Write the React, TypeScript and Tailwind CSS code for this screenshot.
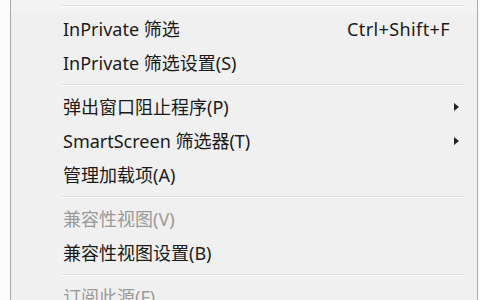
import React from "react";

const font = { fontFamily: '"Noto Sans", "Noto Sans CJK SC", sans-serif' };

function Sep() {
  return (
    <div className="h-[10px] shrink-0 flex flex-col justify-center pl-[50px] pr-[12px]">
      <div className="h-px bg-[#e0e0e0]" />
      <div className="h-px bg-[#fdfdfd]" />
    </div>
  );
}

function Item({
  label,
  shortcut,
  arrow,
  disabled,
}: {
  label: string;
  shortcut?: string;
  arrow?: boolean;
  disabled?: boolean;
}) {
  return (
    <div
      className={`h-[34px] shrink-0 flex items-center pl-[52px] pr-[16px] text-[18px] leading-none ${
        disabled ? "text-[#9a9a9a]" : "text-[#1a1a1a]"
      }`}
    >
      <span className="flex-1 whitespace-nowrap">{label}</span>
      {shortcut && <span className="mr-[11px] whitespace-nowrap tracking-[0.4px]">{shortcut}</span>}
      {arrow && (
        <svg width="6" height="8" viewBox="0 0 6 8" className="mr-[1px]">
          <path d="M0 0 L5 4 L0 8 Z" fill="#222" />
        </svg>
      )}
    </div>
  );
}

export default function App() {
  return (
    <div className="w-[480px] h-[300px] overflow-hidden flex bg-[#fbfbfb]" style={font}>
      <div className="w-[10px] shrink-0 bg-[#fcfcfc]" />
      <div className="w-px shrink-0 bg-[#a9a9a9]" />
      <div className="flex-1 bg-[#f0f0f0] flex flex-col overflow-hidden">
        <div className="h-[12px] shrink-0 flex flex-col pt-[5px] pl-[50px] pr-[12px] bg-[#f3f3f3]">
          <div className="h-px bg-[#e0e0e0]" />
          <div className="h-px bg-[#fdfdfd]" />
        </div>
        <Item label="InPrivate 筛选" shortcut="Ctrl+Shift+F" />
        <Item label="InPrivate 筛选设置(S)" />
        <Sep />
        <Item label="弹出窗口阻止程序(P)" arrow />
        <Item label="SmartScreen 筛选器(T)" arrow />
        <Item label="管理加载项(A)" />
        <Sep />
        <Item label="兼容性视图(V)" disabled />
        <Item label="兼容性视图设置(B)" />
        <Sep />
        <Item label="订阅此源(F)..." disabled />
      </div>
      <div className="w-px shrink-0 bg-[#a9a9a9]" />
      <div className="w-[2px] shrink-0 bg-[#fbfbfb]" />
    </div>
  );
}
